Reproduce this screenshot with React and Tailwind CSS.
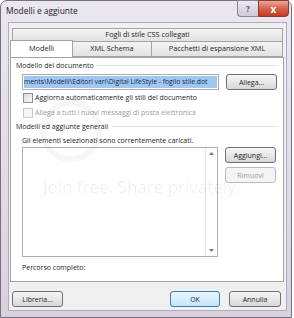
import React from "react";

const btn =
  "h-[16px] flex items-center justify-center rounded-[3px] border text-[7px] leading-none";
const btnOn =
  "border-[#707070] bg-gradient-to-b from-[#f5f5f5] via-[#e8e8e8] to-[#d6d6d6] text-[#1e1e1e]";
const btnOff = "border-[#b8bcbf] bg-[#f4f4f4] text-[#9a9a9a]";

function Check({ disabled, label }) {
  return (
    <div className="flex items-center gap-[2px]">
      <div
        className={
          "w-[10px] h-[10px] border " +
          (disabled
            ? "border-[#c8c8c8] bg-[#f6f6f6]"
            : "border-[#8e8f8f] bg-gradient-to-br from-[#dcdcdc] to-[#f7f7f7]")
        }
      />
      <span
        className={
          "text-[7px] leading-[10px] " + (disabled ? "text-[#9b9b9b]" : "text-[#1e1e1e]")
        }
      >
        {label}
      </span>
    </div>
  );
}

function Section({ children }) {
  return (
    <div className="flex items-center h-[9px] pl-[5px] pr-[5px]">
      <span className="text-[7px] leading-[9px] whitespace-nowrap">{children}</span>
      <div className="flex-1 h-px bg-[#dde3e8] ml-[3px]" />
    </div>
  );
}

function Arrow({ up }) {
  return (
    <svg width="5" height="3" viewBox="0 0 5 3">
      <path d={up ? "M0 3 L2.5 0 L5 3 Z" : "M0 0 L2.5 3 L5 0 Z"} fill="#7a7a7a" />
    </svg>
  );
}

export default function App() {
  return (
    <div className="w-[294px] h-[318px] bg-white relative overflow-hidden font-['Open_Sans','Noto_Sans',sans-serif] text-[#1e1e1e]">
      <div className="w-[292px] h-[318px] flex flex-col border border-[#77707f] rounded-t-[7px] bg-gradient-to-b from-[#ebe7f0] to-[#d8d2e0]">
        {/* title bar */}
        <div className="h-[21px] flex justify-between items-start">
          <span className="pl-[5px] pt-[5px] text-[8.4px] leading-[10px] text-[#1a1a1a]">
            Modelli e aggiunte
          </span>
          <div className="flex mr-[2px] -mt-px">
            <div className="w-[21px] h-[17px] flex items-center justify-center border border-[#8b8494] border-r-0 rounded-bl-[4px] bg-gradient-to-b from-[#ece8f0] to-[#cfc8d8] text-[8px] font-bold text-[#5c5866]">
              ?
            </div>
            <div className="w-[31px] h-[17px] flex items-center justify-center border border-[#8b3a2e] rounded-br-[4px] bg-gradient-to-b from-[#e9a99c] via-[#d5624c] to-[#c23a22] text-[10px] font-bold text-white leading-none">
              x
            </div>
          </div>
        </div>

        {/* client area */}
        <div className="flex-1 ml-[7px] mr-[4px] mb-[6px] border border-[#b2aabb] bg-[#f0f0f0] flex flex-col pt-[5px] pl-px pr-[2px]">
          {/* back tab row */}
          <div className="h-[13px] ml-[2px] mr-px border border-b-0 border-[#a3a3a3] bg-gradient-to-b from-[#f4f4f4] to-[#e2e2e2] flex items-center justify-center text-[7.3px] leading-none">
            Fogli di stile CSS collegati
          </div>
          {/* front tab row */}
          <div className="h-[16px] flex mr-px">
            <div className="relative z-10 w-[63px] h-[17px] -mt-px bg-white border border-b-0 border-[#a3a3a3] flex items-center justify-center text-[7.3px] leading-none">
              Modelli
            </div>
            <div className="w-[79px] border border-l-0 border-[#a3a3a3] bg-gradient-to-b from-[#f4f4f4] to-[#e2e2e2] flex items-center justify-center text-[7.3px] leading-none">
              XML Schema
            </div>
            <div className="flex-1 border border-l-0 border-[#a3a3a3] bg-gradient-to-b from-[#f4f4f4] to-[#e2e2e2] flex items-center justify-center text-[7.3px] leading-none">
              Pacchetti di espansione XML
            </div>
          </div>

          {/* tab panel */}
          <div className="h-[225px] bg-white border border-[#a3a3a3] flex flex-col pt-[3px]">
            <Section>Modello del documento</Section>
            <div className="flex mt-[4px] pl-[11px]">
              <div className="w-[197px] h-[16px] border border-[#abadb3] bg-white p-px flex items-center">
                <div className="w-full h-[12px] bg-[#9ec8f1] flex items-center overflow-hidden">
                  <span className="text-[6.8px] leading-none whitespace-nowrap text-[#16264a]">
                    ments\Modelli\Editori vari\Digital LifeStyle - foglio stile.dot
                  </span>
                </div>
              </div>
              <div className={btn + " " + btnOn + " w-[51px] ml-[7px]"}>Allega...</div>
            </div>
            <div className="pl-[12px] mt-[3px]">
              <Check label="Aggiorna automaticamente gli stili del documento" />
            </div>
            <div className="pl-[12px] mt-[5px]">
              <Check disabled label="Allega a tutti i nuovi messaggi di posta elettronica" />
            </div>
            <div className="mt-[4px]">
              <Section>Modelli ed aggiunte generali</Section>
            </div>
            <div className="pl-[11px] mt-[5px] text-[7px] leading-[9px]">
              Gli elementi selezionati sono correntemente caricati.
            </div>
            <div className="flex mt-[2px] pl-[11px]">
              <div className="w-[196px] h-[110px] border border-[#abadb3] bg-white flex justify-end">
                <div className="w-[12px] border-l border-[#e6e6e6] flex flex-col items-center justify-between py-[4px]">
                  <Arrow up />
                  <Arrow />
                </div>
              </div>
              <div className="flex flex-col ml-[7px] gap-[4px]">
                <div className={btn + " " + btnOn + " w-[51px]"}>Aggiungi...</div>
                <div className={btn + " " + btnOff + " w-[51px]"}>Rimuovi</div>
              </div>
            </div>
            <div className="pl-[11px] mt-[6px] text-[7px] leading-[9px]">Percorso completo:</div>
          </div>

          {/* bottom buttons */}
          <div className="flex pt-[9px] pl-[2px] pr-[3px]">
            <div className={btn + " " + btnOn + " w-[51px]"}>Libreria...</div>
            <div className="flex-1" />
            <div className={btn + " border-[#3c7fb1] bg-gradient-to-b from-[#eaf6fd] via-[#d9f0fc] to-[#bee6fd] text-[#1e1e1e] w-[50px]"}>
              OK
            </div>
            <div className={btn + " " + btnOn + " w-[52px] ml-[9px]"}>Annulla</div>
          </div>
        </div>
      </div>

      {/* photobucket watermark */}
      <div className="absolute left-[40px] top-[100px] w-[62px] h-[62px] rounded-full border-[6px] border-black/[0.035] pointer-events-none" />
      <div className="absolute left-[43px] top-[176px] text-[17px] leading-[22px] text-black/[0.07] whitespace-nowrap pointer-events-none">
        Join free. Share privately.
      </div>
    </div>
  );
}
